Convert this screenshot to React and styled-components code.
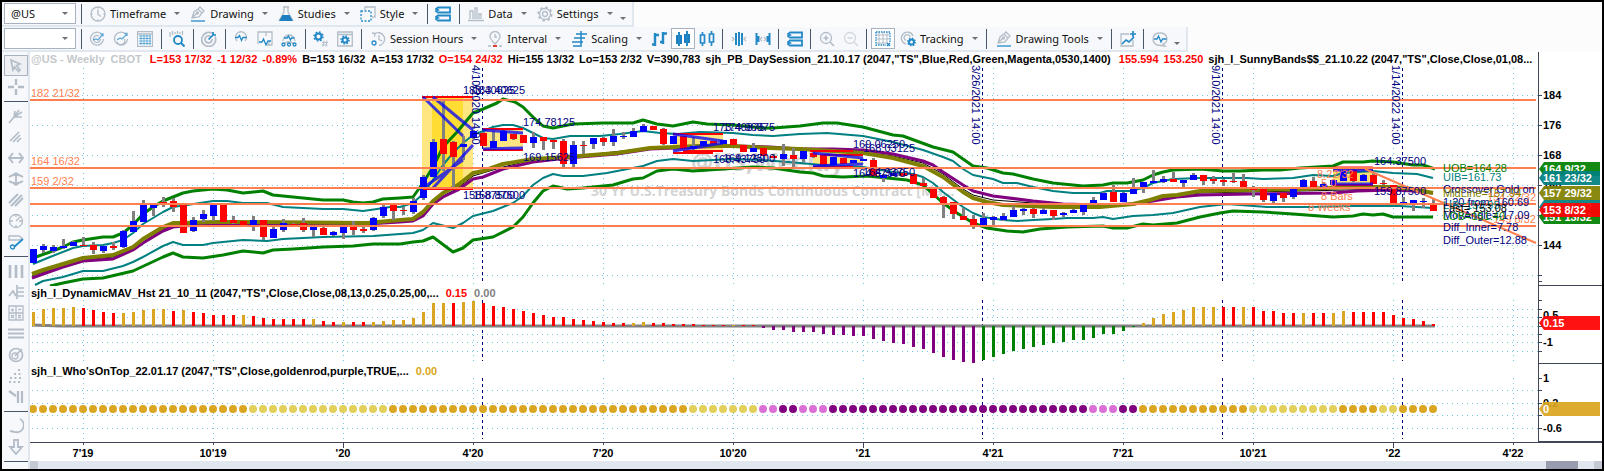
import styled, { createGlobalStyle } from "styled-components";

const GlobalStyle = createGlobalStyle`
  * {
    box-sizing: border-box;
  }
  body {
    margin: 0;
    background: #000;
    font-family: "Liberation Sans", Arial, sans-serif;
    font-size: 11px;
  }
`;

const Frame = styled.div`
  border: 2px solid #000;
  background: #fff;
  overflow: hidden;
`;

const ToolbarArea = styled.header`
  background: #fcfcfc;
`;

const ToolRow = styled.div`
  display: flex;
  align-items: center;
  width: max-content;
  height: 25px;
  padding: 0 4px 0 2px;
  background: #f7f8fb;
  border-bottom: 2px solid #e1e7ef;
  border-right: 2px solid #e1e7ef;
`;

const SelectBox = styled.div`
  position: relative;
  width: 72px;
  height: 21px;
  margin-right: 1px;
  border: 1px solid #a9b2c0;
  background: #fff;
`;

const SymbolSelect = styled.select`
  appearance: none;
  width: 100%;
  height: 100%;
  padding: 0 6px;
  border: 0;
  background: transparent;
  color: #111;
  font: 11px "Noto Sans", "Open Sans", sans-serif;
`;

const Caret = styled.span`
  flex: none;
  width: 6px;
  border: 3px solid transparent;
  border-top-color: #6d7078;
  border-bottom: 0;
`;

const SelectCaret = styled(Caret)`
  position: absolute;
  right: 7px;
  top: 8px;
  pointer-events: none;
`;

const Divider = styled.i`
  flex: none;
  width: 8px;
  height: 20px;
  background: linear-gradient(#4a5568, #4a5568) center / 1px 100% no-repeat;
`;

const ToolButton = styled.button`
  display: flex;
  align-items: center;
  justify-content: center;
  flex: none;
  width: 24px;
  height: 21px;
  padding: 0;
  border: 1px solid ${(p) => (p.$on ? "#a9b2c0" : "transparent")};
  background: ${(p) => (p.$on ? "#fff" : "transparent")};
`;

const MenuButton = styled.button`
  display: flex;
  align-items: center;
  flex: none;
  gap: 4px;
  height: 21px;
  padding: 0 5px;
  border: 0;
  background: transparent;
  color: #111;
  font: 11px "Noto Sans", "Open Sans", sans-serif;

  ${Caret} {
    margin-left: 4px;
  }
`;

const MoreButton = styled.button`
  display: flex;
  align-items: flex-end;
  width: 10px;
  height: 21px;
  padding: 0 2px 4px;
  border: 0;
  background: transparent;
`;

const Glyph = styled.svg`
  flex: none;
  width: 16px;
  height: 16px;
  fill: none;
  stroke: #b3bdc8;
  stroke-width: 1.3;

  .b {
    stroke: #2288c6;
  }
  .bf {
    fill: #1e7fc0;
    stroke: none;
  }
`;

const Body = styled.div`
  display: flex;
`;

const Rail = styled.nav`
  display: flex;
  flex-direction: column;
  flex: none;
  width: 28px;
  padding: 3px 0 0 2px;
  background: #f7f8fb;
  border-right: 2px solid #e1e7ef;
`;

const RailButton = styled(ToolButton)`
  background: ${(p) => (p.$on ? "#eef0f4" : "transparent")};
`;

const RailDivider = styled.i`
  height: 8px;
  background: linear-gradient(#4a5568, #4a5568) center / 100% 1px no-repeat;
`;

const Charts = styled.main`
  flex: 1;
  min-width: 0;
  background: #fff;
`;

const Pane = styled.section`
  display: flex;
  overflow: hidden;
`;

const Plot = styled.div`
  flex: 1;
  min-width: 0;
`;

const PlotCanvas = styled.div`
  display: flex;
  justify-content: flex-end;
`;

const Drawing = styled.svg`
  display: block;
  flex: none;
  overflow: visible;
  font-size: 11px;
`;

const Scale = styled(Drawing)`
  border-left: 1px solid #3f4656;
  border-bottom: 1px solid #3f4656;
  font-weight: bold;
`;

const StudyLine = styled.div`
  display: flex;
  gap: ${(p) => (p.$tight ? 5 : 7)}px;
  height: ${(p) => p.$h}px;
  padding-left: 1px;
  line-height: 15px;
  font-weight: bold;
  white-space: nowrap;
`;

const Value = styled.span`
  color: ${(p) => p.$c || "#000"};
`;

const TimeAxis = styled.div`
  display: flex;
  height: 19px;
  border-top: 1px solid #3f4656;
`;

const ScrollTrack = styled.div`
  display: flex;
  justify-content: space-between;
  height: 8px;
  background: #e1e7ef;
`;

const ScrollEnd = styled.i`
  width: 8px;
  background: #c4c9d3;
`;

const ScrollThumb = styled.i`
  width: 32px;
  margin: 0 16px 0 auto;
  background: #979dae;
`;

const icons = {
  clock: (
    <>
      <circle cx="8" cy="8" r="7" />
      <path d="M8 3.500v5l3 2M8 1v1.500M1 8h1.500M15 8h-1.500M8 15v-1.500" />
    </>
  ),
  pen: (
    <>
      <path d="M2 12l2-6 4-3 4 4-3 4zM8 3l2-2 4 4-2 2M2 12l5-5" />
      <circle cx="7.500" cy="7" r="1" />
      <path className="b" d="M1 15h14" />
    </>
  ),
  flask: (
    <>
      <path d="M5 1h6M6 1v5l-4.500 8h13L10 6V1" />
      <path className="bf" d="M4.500 9h7l3.500 6H1z" />
    </>
  ),
  style: (
    <>
      <path d="M5 4V1h10v10h-3" />
      <path className="b" strokeDasharray="2 1.500" d="M1 5h10v10H1z" />
    </>
  ),
  link: <path className="b" strokeWidth="1.800" d="M3 1.500h12v5H3L1 5l2-1-2-1zM3 9.500h12v5H3L1 13l2-1-2-1z" />,
  data: <path d="M2 13V5h3v8M7 13V2h2v11M11 13V8h2v5M0 14.500h16" />,
  gear: (
    <>
      <circle cx="8" cy="8" r="2.500" />
      <circle cx="8" cy="8" r="5.500" />
      <circle cx="8" cy="8" r="6.700" strokeDasharray="2.600 2.660" strokeWidth="1.800" />
    </>
  ),
  radarPulse: (
    <>
      <path d="M12 2.500A6.500 6.500 0 1 0 14.500 8M10 5a3.500 3.500 0 1 0 1.500 3" />
      <path className="b" opacity=".7" d="M4 9l3-1 2 1 5-6M11.500 3H14v2.500" />
    </>
  ),
  radarUp: (
    <>
      <path d="M12 2.500A6.500 6.500 0 1 0 14.500 8M4 11a4 4 0 0 0 7.500-3" />
      <path className="b" opacity=".7" d="M4 9l3-2 2 1 5-5M11.500 2.500H14V5" />
    </>
  ),
  table: (
    <>
      <path d="M.5.500h15v15H.5zM1 3h14" />
      <path className="b" strokeWidth="1" d="M2 5h12M2 7.500h12M2 10h12M2 12.500h12M4 4v10M7 4v10M10 4v10M13 4v10" opacity=".6" />
    </>
  ),
  search: (
    <>
      <path d="M1 1v5M3.500 0v4M6 1v2M8.500 0v3M11 1v2M13.500 0v4" />
      <circle className="b" cx="9" cy="9" r="4" strokeWidth="1.800" />
      <path className="b" strokeWidth="2" d="M12 12l3.500 3.500" />
    </>
  ),
  target: (
    <>
      <path strokeWidth="1.700" d="M11 2.300A7 7 0 1 0 14 5.500M9.500 5.500A3.500 3.500 0 1 0 11 8" />
      <path className="b" strokeWidth="1.700" d="M7.500 8.500L13 3M12 1v3h3" />
    </>
  ),
  pulse: (
    <>
      <path d="M4 10a5.500 5.500 0 1 1 8 0" />
      <path className="b" d="M2 6.500h3l1.500-2 2 5 1.500-3h4" />
    </>
  ),
  pulseBox: (
    <>
      <path d="M1 13V1h14v13h-5M9 1v4M12 14v-3" />
      <path className="b" d="M2 11h3l1.500-3 2.500 6 2-4h3" />
    </>
  ),
  pulseNet: (
    <>
      <path d="M2 10a6 6 0 1 1 12 0M3 13l3-2 4 0 3 2" />
      <path className="b" d="M3 7h3l1.500-2 2 4 1-2h3" />
      <circle className="b" cx="2.500" cy="13.500" r="1.500" />
      <circle className="b" cx="8" cy="13.500" r="1.500" />
      <circle className="b" cx="13.500" cy="13.500" r="1.500" />
    </>
  ),
  gearHash: (
    <>
      <circle className="b" cx="5.500" cy="5.500" r="3" strokeWidth="2" />
      <circle className="b" cx="5.500" cy="5.500" r="4.500" strokeDasharray="1.700 1.830" strokeWidth="1.500" />
      <path d="M11 9.500l-1 6M14 9.500l-1 6M9 11.500h6M8.500 14h6" strokeWidth="1" />
    </>
  ),
  gearBox: (
    <>
      <path d="M.7 1h14.600v14H.7zM1 3.500h14" />
      <circle className="b" cx="8" cy="9" r="2.500" strokeWidth="2" />
      <circle className="b" cx="8" cy="9" r="4" strokeDasharray="1.500 1.640" strokeWidth="1.500" />
    </>
  ),
  session: (
    <>
      <path d="M4 3a6.500 6.500 0 1 1 5 11.500M9 4v4.500l3 1.500" />
      <path d="M2 2l3 .5-.5 3" />
      <circle className="b" cx="4" cy="12" r="2" />
    </>
  ),
  pin: (
    <>
      <path d="M8 13C4 9 3 7.500 3 5.500a5 5 0 0 1 10 0C13 7.500 12 9 8 13zM8 3v3h2M1 15h3M12 15h3" />
      <path stroke="#e04030" strokeWidth="2" d="M6 15h4" />
    </>
  ),
  scaling: <path className="b" strokeWidth="1.500" d="M10 0v16M5 3h11M3 7h11M1 11h11M2 15h7" />,
  ohlc: <path className="b" strokeWidth="2.400" d="M4 2v13M1 13.500h3M4 4h4M12 1v12M9 11h3M12 2.500h4" />,
  candles: (
    <>
      <path className="bf" d="M1 4h6v9H1zM9 3h6v9H9z" />
      <path className="b" strokeWidth="2" d="M4 1v14M12 0v15" />
    </>
  ),
  hollow: <path className="b" strokeWidth="1.700" d="M1.500 4h4v8h-4zM10.500 3h4v8h-4zM3.500 1v3M3.500 12v3M12.500 0v3M12.500 11v4" />,
  squeeze: (
    <>
      <path className="b" strokeWidth="2" d="M5 2v12M8 1v14M11 2v12" />
      <path d="M1 6l2 2-2 2M15 6l-2 2 2 2" />
    </>
  ),
  spread: (
    <>
      <path className="b" strokeWidth="2" d="M1.500 2v12M14.500 2v12M3.500 5v6M12.500 5v6" />
      <path d="M7 6L5 8l2 2M9 6l2 2-2 2" />
    </>
  ),
  zoomIn: (
    <>
      <circle cx="7" cy="7" r="5.500" />
      <path d="M4.500 7h5M7 4.500v5M11 11l4 4" strokeWidth="1.700" />
    </>
  ),
  zoomOut: (
    <g opacity=".55">
      <circle cx="7" cy="7" r="5.500" />
      <path d="M4.500 7h5M11 11l4 4" />
    </g>
  ),
  grid: (
    <>
      <path strokeWidth="1" d="M1 4h13M1 8h13M1 12h11M4 1v13M8 1v13M12 1v11" />
      <path className="b" strokeDasharray="1.500 1" d="M1 1h14v10M1 1v13h10" />
      <path className="b" d="M12 12l3 3M15 12l-3 3" />
    </>
  ),
  tracking: (
    <>
      <path d="M13 5A6 6 0 1 0 6 13M10 6A3 3 0 1 0 6 9.500" />
      <circle className="b" cx="11.500" cy="11" r="2.500" strokeWidth="2" />
      <circle className="b" cx="11.500" cy="11" r="3.800" strokeDasharray="1.400 1.580" />
    </>
  ),
  addChart: (
    <>
      <path d="M9 3H1v12h12V9" />
      <path className="b" strokeWidth="1.700" d="M2 13l4-4 3 2 5-5M13 0v6M10 3h6" />
    </>
  ),
  bubble: (
    <>
      <path d="M5 14c-6-3-5-12 3-12s9 9 3 11l2 2z" />
      <path className="b" d="M2 8h3l1.500-3 2.500 6 1.500-3h4" />
    </>
  ),
  cursor: <path strokeWidth="1.700" d="M3 2l9 4-3.500 1.500L12 12l-1.500 1.500-4-4.500L5 12z" />,
  cross: <path strokeWidth="2.400" d="M8 0v6M8 10v6M0 8h6M10 8h6" />,
  fan: <path strokeWidth="1.600" d="M1 15l5-6M6 9l1-6M6 9l5-7M6 9l8-5M6 9l8 0" />,
  speed: <path strokeWidth="1.700" d="M2 12l9-9M5 13l7-7M9 13l4-4" />,
  widthArrow: <path strokeWidth="2" d="M1 8h14M5 3L1 8l4 5M11 3l4 5-4 5" />,
  heightArrow: <path strokeWidth="1.800" d="M8 2v12M1 6c4-3 10-3 14 0M1 10c4 3 10 3 14 0M5 4l3-2 3 2M5 12l3 2 3-2" />,
  slashes: <path strokeWidth="2" d="M1 11l9-9M3 14L14 3M7 14l8-8" />,
  gauge: (
    <>
      <circle cx="8" cy="8" r="6.500" />
      <path d="M8 8l4-4M2 8h3M11 8h3M8 2v2M8 12v2" />
    </>
  ),
  brush: (
    <>
      <path d="M1 2h10l3 2-3 2H1z" />
      <path className="b" strokeWidth="1.700" d="M15 5l-9 8" />
      <circle className="b" cx="4.500" cy="13" r="2" />
    </>
  ),
  bars: <path strokeWidth="2.600" d="M2 2v13M8 2v13M14 2v13" />,
  fork: <path strokeWidth="1.700" d="M1 12l4-5 3 5M9 1v14M10 4h6M10 8h6M10 12h6" />,
  calc: <path d="M1 1h14v14H1zM8 1v14M1 8h14M3 5h3M4.500 3.500v3M10 4.500h3M3 10l3 3M6 10l-3 3M10 10.500h3M10 12.500h3" />,
  lines: <path strokeWidth="2" d="M0 3.500h16M0 7.500h16M0 11.500h16" />,
  compass: (
    <>
      <circle cx="8" cy="8" r="6.500" strokeWidth="1.700" />
      <circle cx="7" cy="9" r="3" />
      <path strokeWidth="1.700" d="M7 9l7-7" />
    </>
  ),
  dots: <path strokeWidth="2.200" strokeDasharray="2 2.500" d="M1 14h12M2 10h12M6 6h9M10 2h4" />,
  wedge: <path strokeWidth="2.200" d="M1 2l7 5M10 2v12M14 2v12" />,
  arc: <path strokeWidth="1.800" d="M12 1a7 7 0 0 1-5 13l-5-1" />,
  down: <path strokeWidth="1.800" d="M6 1h4v7h4l-6 7-6-7h4z" />,
};

const Icon = ({ name }) => (
  <Glyph viewBox="0 0 16 16" aria-hidden="true">
    {icons[name]}
  </Glyph>
);

const Tool = ({ icon, on }) => (
  <ToolButton $on={on} aria-label={icon}>
    <Icon name={icon} />
  </ToolButton>
);

const MenuTool = ({ icon, children }) => (
  <MenuButton>
    <Icon name={icon} />
    {children}
    <Caret />
  </MenuButton>
);

const Picker = ({ label, value }) => (
  <SelectBox>
    <SymbolSelect aria-label={label} defaultValue={value}>
      <option>{value}</option>
    </SymbolSelect>
    <SelectCaret />
  </SelectBox>
);

// x of every weekly bar
const barX = (i) => 33 + i * 10;

const quarters = [
  [83, "7'19"],
  [213, "10'19"],
  [343, "'20"],
  [473, "4'20"],
  [603, "7'20"],
  [733, "10'20"],
  [863, "'21"],
  [993, "4'21"],
  [1123, "7'21"],
  [1253, "10'21"],
  [1393, "'22"],
  [1513, "4'22"],
];

const sessions = [
  [482, "4/10/2020 14:00"],
  [982, "3/26/2021 14:00"],
  [1222, "9/10/2021 14:00"],
  [1402, "1/14/2022 14:00"],
];

const bands = {
  upperOuter:
    "33,258 50,252 63,247 73,242 83,240 103,237 113,237 123,233 133,225 143,214 153,207 163,201 173,197 183,193 193,191 203,190 213,189 227,190 243,193 263,191 273,195 293,197 323,200 343,200 353,202 363,203 373,202 383,199 400,198 413,197 423,183 433,167 443,147 457,132 473,113 483,109 497,103 503,99 515,102 523,107 533,117 543,126 553,128 563,126 573,124 603,123 633,123 643,120 657,124 673,126 693,122 707,124 733,125 763,128 773,128 800,126 823,123 837,123 863,127 893,135 903,136 933,147 953,152 963,159 973,166 987,168 1003,173 1013,174 1033,179 1053,183 1083,186 1103,185 1113,183 1127,183 1143,180 1153,175 1163,172 1173,170 1200,169 1223,171 1240,171 1263,170 1280,170 1300,168 1333,166 1343,162 1353,162 1363,162 1373,161 1393,162 1413,165 1423,165 1435,169",
  upperInner:
    "33,264 50,257 73,248 83,246 103,245 113,243 123,240 133,233 143,224 163,212 173,207 187,205 200,203 213,201 227,201 243,203 267,203 283,207 323,209 343,209 363,211 377,209 390,207 400,207 413,203 423,194 433,180 443,165 453,153 463,143 473,135 493,127 503,125 513,125 523,128 533,133 543,138 553,139 570,136 600,136 620,134 643,131 660,133 677,134 700,132 733,133 753,135 773,136 800,134 827,133 863,136 893,142 923,150 943,157 953,161 963,169 973,175 993,179 1003,183 1017,183 1033,187 1053,191 1073,193 1100,193 1107,191 1130,191 1143,188 1153,183 1173,179 1200,178 1220,178 1247,178 1263,179 1293,178 1313,175 1333,176 1343,173 1373,171 1393,173 1417,174 1433,178",
  gold:
    "32,274 43,270 63,264 83,258 113,255 133,247 143,239 163,227 173,223 183,223 213,222 240,222 367,223 400,220 413,219 423,212 433,201 443,193 458,185 473,173 483,171 503,164 533,159 567,157 617,153 650,148 700,146 733,146 770,148 800,149 833,151 863,153 893,158 923,166 943,177 963,192 973,198 987,202 1003,205 1053,207 1100,207 1133,204 1150,200 1163,196 1177,195 1200,191 1300,189 1353,187 1393,187 1413,189 1433,193",
  purple:
    "32,278 43,274 63,267 83,261 113,259 133,250 143,243 163,231 173,227 183,226 213,224 240,224 367,224 400,222 413,221 423,216 433,204 443,197 458,190 473,179 483,177 503,169 533,162 567,158 617,154 650,149 700,147 733,146 770,147 800,149 833,149 863,150 893,154 923,161 933,165 943,172 963,185 973,191 993,196 1033,201 1063,204 1100,205 1133,204 1153,201 1177,197 1200,195 1250,194 1333,193 1357,191 1393,190 1413,191 1433,193",
  middle:
    "32,276 63,265 83,260 113,257 133,249 163,229 173,225 213,223 367,224 400,221 413,220 423,214 433,203 443,196 458,188 473,176 503,167 533,160 567,157 650,148 733,146 800,149 863,152 893,156 923,163 943,174 963,189 973,195 993,200 1033,203 1063,205 1100,206 1133,204 1177,196 1200,193 1300,191 1393,189 1433,193",
  lowerInner:
    "35,285 43,281 63,277 83,271 103,271 123,266 133,262 143,257 163,246 173,242 183,245 203,245 213,243 243,240 267,241 283,239 323,237 373,236 400,234 413,233 423,230 433,223 453,228 463,223 473,216 493,211 513,203 523,196 533,185 543,178 553,174 563,176 583,176 607,173 643,166 657,161 673,159 693,161 733,159 763,160 800,163 833,166 863,167 893,172 913,174 923,177 933,183 943,192 963,207 973,213 983,217 1003,220 1017,221 1033,220 1053,219 1067,218 1093,218 1103,217 1113,219 1133,216 1153,215 1173,213 1200,207 1227,204 1267,207 1310,207 1353,206 1400,206 1433,208",
  lowerOuter:
    "50,286 63,283 83,279 103,278 133,271 163,257 173,253 183,257 203,258 223,255 233,253 243,251 263,253 273,250 293,249 323,247 353,246 373,244 400,244 413,242 423,241 433,237 453,252 463,248 473,240 493,237 513,227 523,217 533,203 543,191 553,186 567,189 583,188 613,185 633,179 643,178 657,171 673,169 693,171 753,167 773,168 800,172 813,173 823,176 843,177 867,176 887,178 907,180 923,185 933,194 943,203 957,213 973,223 987,228 1007,231 1023,232 1040,229 1067,227 1103,226 1113,228 1127,228 1143,224 1153,225 1177,223 1200,217 1220,213 1233,211 1263,212 1293,214 1333,217 1353,216 1363,214 1373,215 1383,214 1393,217 1433,217",
};

// direction, body top, body bottom, wick top, wick bottom
const candles = `
b 249 263 249 263,b 246 250 244 253,b 247 251 245 253,b 246 248 239 249,b 242 246 241 246,r 245 246 237 246,r 245 250 242 254,b 246 251 246 253,r 246 248 242 250,b 231 247 230 248,
b 221 232 211 232,b 204 222 200 222,b 204 208 204 216,r 202 204 197 207,r 201 207 198 212,r 205 233 205 233,b 220 231 217 232,b 214 219 210 222,b 204 216 204 221,r 204 222 204 222,
r 220 223 216 224,r 221 225 221 225,b 220 226 216 231,r 220 237 220 240,b 229 238 226 238,b 223 230 219 232,r 224 225 223 226,r 223 230 218 232,b 226 230 226 237,r 228 235 227 235,
b 232 235 231 236,b 227 233 225 239,r 226 230 221 235,r 229 231 225 233,b 218 230 217 231,b 207 216 205 218,r 205 211 205 220,r 210 211 207 215,b 201 212 198 214,b 177 198 175 200,
b 142 177 139 177,r 139 154 99 171,r 142 157 141 187,b 144 147 136 160,b 131 138 130 139,r 133 146 132 146,b 141 148 131 148,b 131 141 130 141,r 134 139 134 140,r 135 143 135 143,
b 137 143 132 148,r 137 141 137 150,r 140 142 140 149,r 141 164 139 169,b 145 164 141 167,r 145 146 141 154,b 138 144 138 149,r 138 142 137 146,b 136 142 129 146,b 136 137 132 139,
b 131 137 128 137,b 126 132 124 132,r 126 130 126 130,r 129 144 128 145,b 136 144 136 144,r 136 149 136 149,b 146 149 137 150,b 141 146 141 146,r 141 144 141 144,b 140 144 140 144,
r 139 145 139 145,r 145 152 145 152,b 148 152 143 152,r 148 156 148 156,r 156 158 154 158,b 154 159 144 166,r 155 159 148 167,b 151 159 151 162,r 153 157 151 158,r 154 165 154 165,
b 157 165 157 165,r 158 164 158 164,b 160 163 160 163,b 159 161 159 161,r 160 176 158 176,b 175 178 174 182,b 173 176 172 176,r 173 176 173 177,r 174 184 174 184,r 183 186 178 186,
r 189 198 188 198,r 197 203 196 218,r 202 214 202 219,r 216 220 208 220,r 219 225 215 229,b 218 225 213 225,b 217 220 216 225,b 216 220 213 221,b 210 217 206 217,b 209 211 208 215,
r 209 214 208 218,b 210 214 208 214,r 210 216 210 220,b 213 215 212 217,b 210 213 209 213,b 205 212 205 215,b 200 204 197 204,b 193 200 192 200,r 192 202 185 202,b 193 202 192 202,
b 189 194 178 194,b 182 187 182 193,b 181 183 170 183,b 179 182 176 183,r 179 182 172 182,b 180 183 180 187,b 175 180 173 180,r 175 181 175 185,r 179 181 176 184,r 180 182 179 186,
r 181 182 173 183,r 181 187 174 187,r 188 190 186 197,r 189 200 189 202,b 193 201 193 203,r 193 198 193 202,b 189 197 189 199,b 180 187 179 187,r 181 187 177 187,b 184 187 182 187,
b 180 185 180 186,b 170 181 170 181,r 170 181 169 182,b 175 181 174 181,r 175 184 171 184,r 183 184 180 185,r 185 203 185 203,b 202 203 197 203,b 200 203 200 211,b 201 202 198 208,
r 203 211 198 211`
  .trim()
  .split(",")
  .map((row) => row.trim().split(" "));

const levels = [100, 168, 188, 204, 226];
const priceGrid = [95, 125, 155, 185, 215, 245, 275];

const histColors = { g: "#daa520", r: "#f00", p: "#800080", n: "#008000", y: "#e2d05a", o: "#da70d6" };
const histKinds =
  "gggggrrrrgggggrgrrrrrgrrrrrrgrrgrrggggggggrggrrrrrrrrrrrrrrrggrrrrrrrrgrr" + "p".repeat(22) + "n".repeat(16) + "ggggggggrrgrrrrrgrrggrrrrrrrrr";
const histEnds = [
  312, 309, 308, 308, 307, 308, 310, 312, 313, 313, 312, 310, 309, 309, 311, 310, 312, 313, 315, 315, 315, 315, 316, 318,
  319, 319, 319, 319, 319, 321, 322, 322, 322, 322, 322, 321, 320, 320, 318, 312, 303, 303, 303, 302, 301, 303, 306, 307,
  309, 311, 313, 315, 317, 317, 319, 320, 321, 322, 323, 323, 323, 322, 323, 323, 324, 324, 324, 325, 325, 325, 325, 325,
  325, 328, 330, 330, 332, 332, 332, 334, 335, 335, 336, 336, 339, 341, 343, 344, 347, 349, 353, 357, 360, 362, 363, 360,
  357, 354, 351, 349, 347, 345, 343, 342, 340, 340, 338, 334, 334, 331, 327, 323, 318, 314, 312, 310, 307, 307, 307, 307,
  307, 307, 307, 311, 311, 313, 313, 313, 313, 313, 313, 311, 312, 312, 312, 312, 315, 318, 319, 321, 324,
];

const dotRuns = [
  ["g", 22],
  ["y", 14],
  ["g", 30],
  ["y", 7],
  ["o", 2],
  ["p", 2],
  ["o", 3],
  ["p", 26],
  ["o", 3],
  ["p", 2],
  ["g", 11],
  ["y", 9],
  ["g", 4],
  ["y", 2],
  ["g", 4],
];
const dotKinds = dotRuns.map(([kind, n]) => kind.repeat(n)).join("");

const navyLabels = [
  [463, 94, "183.40625"],
  [473, 94, "183.40625"],
  [463, 199, "158.87500"],
  [473, 199, "158.87500"],
  [523, 126, "174.78125"],
  [523, 161, "169.15625"],
  [713, 131, "173.46875"],
  [723, 131, "174.96875"],
  [713, 163, "168.43750"],
  [723, 162, "169.12500"],
  [853, 148, "169.06250"],
  [863, 152, "168.03125"],
  [853, 177, "164.87500"],
  [863, 176, "164.93750"],
  [1374, 165, "164.37500"],
  [1374, 195, "159.87500"],
];

const readouts = [
  [172, "UOB=164.28", "#008000"],
  [181, "UIB=161.73", "#008080"],
  [193, "Crossover Gold on", "#000080"],
  [197, "MidLine=157.94", "#808000"],
  [206, "1:20 from: 160.69", "#000080"],
  [209, "LIB=153.95", "#008080"],
  [212, "Last= 153.08", "#000"],
  [219, "MovAngle=-17.09", "#000080"],
  [220, "LOB=151.40", "#008000"],
  [231, "Diff_Inner=7.78", "#000080"],
  [244, "Diff_Outer=12.88", "#000080"],
];

const Grid = ({ rows, top, bottom }) => (
  <g stroke="#78c4e4" strokeDasharray="1 4" shapeRendering="crispEdges">
    {rows.map((y) => (
      <line key={y} x1="32" x2="1538" y1={y + 0.5} y2={y + 0.5} />
    ))}
    {quarters.map(([x]) => (
      <line key={x} x1={x + 0.5} x2={x + 0.5} y1={top} y2={bottom} />
    ))}
  </g>
);

const SessionLines = ({ top, bottom }) => (
  <g stroke="#000080" strokeDasharray="3 3" shapeRendering="crispEdges">
    {sessions.map(([x]) => (
      <line key={x} x1={x + 0.5} x2={x + 0.5} y1={top} y2={bottom} />
    ))}
  </g>
);

const Zone = ({ x, y, w, h, fill = "#ffe680" }) => <rect x={x} y={y} width={w} height={h} fill={fill} />;

const PriceChart = () => (
  <Drawing width="1508" height="218" viewBox="30 68 1508 218">
    <g fill="#d4d4d4" fontFamily="Open Sans, Noto Sans, sans-serif" fontWeight="bold">
      <text x="691" y="171" fontSize="25">
        @US,Weekly
      </text>
      <text x="591" y="196" fontSize="14">
        30 Yr U.S.Treasury Bonds Continuous Contract [Ma...
      </text>
    </g>
    <Grid rows={priceGrid} top={68} bottom={286} />
    <Zone x={422} y={97} w={51} h={92} />
    <Zone x={432} y={97} w={31} h={92} fill="#ffdd33" />
    <Zone x={483} y={129} w={40} h={21} />
    <Zone x={673} y={134} w={50} h={17} />
    <Zone x={813} y={152} w={50} h={14} />
    <Zone x={1333} y={168} w={40} h={17} fill="#ffdf70" />
    <SessionLines top={68} bottom={284} />
    <g fill="none" strokeLinejoin="round">
      <polyline points={bands.upperOuter} stroke="#008000" strokeWidth="3" />
      <polyline points={bands.upperInner} stroke="#008080" strokeWidth="2" />
      <polyline points={bands.middle} stroke="#000" />
      <polyline points={bands.purple} stroke="#800080" strokeWidth="3" />
      <polyline points={bands.gold} stroke="#808000" strokeWidth="4" />
      <polyline points={bands.lowerInner} stroke="#008080" strokeWidth="2" />
      <polyline points={bands.lowerOuter} stroke="#008000" strokeWidth="3" />
    </g>
    <g shapeRendering="crispEdges">
      {candles.map(([dir, top, bottom, high, low], i) => (
        <g key={i}>
          <rect x={barX(i) - 1} y={high} width="3" height={low - high} fill="#808080" />
          <rect x={barX(i) - 3} y={top} width="7" height={bottom - top} fill={dir === "b" ? "#00f" : "#f00"} />
        </g>
      ))}
    </g>
    <g stroke="#f00" strokeWidth="2">
      <path d="M422 97h51M423 189h50M483 129h40M483 150h40M673 134h50M683 151h40M673 153h40M810 151h43M823 155h40M813 167h40M1333 185h40" />
      <path d="M1333 168h40" strokeWidth="3" />
    </g>
    <g stroke="#00f" strokeWidth="3" opacity=".75">
      <path d="M423 97L463 136M433 97L473 130M423 188L463 160M433 188L473 145M483 130L523 133M483 149L523 148M673 134L723 141M673 151L723 143M813 153L863 158M813 166L863 164M1333 170h40M1333 184h40" />
    </g>
    <g stroke="#ff7f50" strokeWidth="2">
      {levels.map((y) => (
        <line key={y} x1="30" x2="1536" y1={y} y2={y} />
      ))}
      <path d="M1365 169L1536 243" />
    </g>
    <g fill="#ff7f50">
      <text x="31" y="97">
        182 21/32
      </text>
      <text x="31" y="165">
        164 16/32
      </text>
      <text x="31" y="185">
        159 2/32
      </text>
      <text x="1317" y="178">
        8.22/32
      </text>
      <text x="1321" y="187">
        5.0
      </text>
      <text x="1321" y="200">
        8 Bars
      </text>
      <text x="1308" y="211">
        8 Weeks
      </text>
      <text x="1536" y="201" textAnchor="end">
        154 22/32
      </text>
      <text x="1536" y="223" textAnchor="end">
        149 8/32
      </text>
    </g>
    <g fill="#000080">
      {navyLabels.map(([x, y, label], i) => (
        <text key={i} x={x} y={y}>
          {label}
        </text>
      ))}
      {sessions.map(([x, label]) => (
        <text key={x} transform={`translate(${x - 10} 65) rotate(90)`}>
          {label}
        </text>
      ))}
    </g>
    {readouts.map(([y, label, color]) => (
      <text key={label} x="1443" y={y} fill={color}>
        {label}
      </text>
    ))}
  </Drawing>
);

const Tag = ({ y, color, children }) => (
  <g>
    <path d={`M0 ${y + 7}L5 ${y}H61V${y + 14}H5Z`} fill={color} opacity=".93" />
    <text x="4" y={y + 11} fill="#fff">
      {children}
    </text>
  </g>
);

const Ticks = ({ ys }) => (
  <g stroke="#3f4656" shapeRendering="crispEdges">
    {ys.map((y) => (
      <line key={y} x1="0" x2="3" y1={y + 0.5} y2={y + 0.5} />
    ))}
  </g>
);

const axisPrices = [
  [99, "184"],
  [129, "176"],
  [159, "168"],
  [189, "160"],
  [249, "144"],
];

const Histogram = () => (
  <Drawing width="1508" height="64" viewBox="30 300 1508 64">
    <Grid rows={[309, 317, 326, 334, 342, 351]} top={300} bottom={361} />
    <SessionLines top={300} bottom={361} />
    <path d="M32 325L60 326H1435" stroke="#808080" strokeWidth="3" fill="none" />
    <g shapeRendering="crispEdges">
      {histEnds.map((end, i) => (
        <rect
          key={i}
          x={barX(i) - 1}
          y={Math.min(end, 326)}
          width="3"
          height={Math.abs(326 - end)}
          fill={histColors[histKinds[i]]}
        />
      ))}
    </g>
  </Drawing>
);

const TrendDots = () => (
  <Drawing width="1508" height="64" viewBox="30 378 1508 64">
    <Grid rows={[390, 403, 415, 428]} top={378} bottom={441} />
    <SessionLines top={378} bottom={439} />
    {[...dotKinds].map((kind, i) => (
      <circle key={i} cx={barX(i)} cy="409" r="4" fill={histColors[kind]} />
    ))}
  </Drawing>
);

const App = () => (
  <>
    <GlobalStyle />
    <Frame>
      <ToolbarArea>
        <ToolRow>
          <Picker label="Symbol" value="@US" />
          <Divider />
          <MenuTool icon="clock">Timeframe</MenuTool>
          <MenuTool icon="pen">Drawing</MenuTool>
          <MenuTool icon="flask">Studies</MenuTool>
          <MenuTool icon="style">Style</MenuTool>
          <Divider />
          <Tool icon="link" />
          <Divider />
          <MenuTool icon="data">Data</MenuTool>
          <MenuTool icon="gear">Settings</MenuTool>
          <MoreButton aria-label="More">
            <Caret />
          </MoreButton>
        </ToolRow>
        <ToolRow>
          <Picker label="Template" value="" />
          <Divider />
          <Tool icon="radarPulse" />
          <Tool icon="radarUp" />
          <Tool icon="table" />
          <Divider />
          <Tool icon="search" />
          <Divider />
          <Tool icon="target" />
          <Divider />
          <Tool icon="pulse" />
          <Tool icon="pulseBox" />
          <Tool icon="pulseNet" />
          <Divider />
          <Tool icon="gearHash" />
          <Tool icon="gearBox" />
          <Divider />
          <MenuTool icon="session">Session Hours</MenuTool>
          <MenuTool icon="pin">Interval</MenuTool>
          <MenuTool icon="scaling">Scaling</MenuTool>
          <Tool icon="ohlc" />
          <Tool icon="candles" on />
          <Tool icon="hollow" />
          <Divider />
          <Tool icon="squeeze" />
          <Tool icon="spread" />
          <Divider />
          <Tool icon="link" />
          <Divider />
          <Tool icon="zoomIn" />
          <Tool icon="zoomOut" />
          <Divider />
          <Tool icon="grid" on />
          <MenuTool icon="tracking">Tracking</MenuTool>
          <Divider />
          <MenuTool icon="pen">Drawing Tools</MenuTool>
          <Divider />
          <Tool icon="addChart" />
          <Divider />
          <Tool icon="bubble" />
          <MoreButton aria-label="More">
            <Caret />
          </MoreButton>
        </ToolRow>
      </ToolbarArea>
      <Body>
        <Rail>
          {[
            ["cursor", "cross"],
            ["fan", "speed", "widthArrow", "heightArrow", "slashes", "gauge", "brush"],
            ["bars", "fork", "calc", "lines", "compass", "dots", "wedge"],
            ["arc", "down"],
          ].map((group) => [
            ...group.map((icon) => (
              <RailButton key={icon} $on={icon === "cursor"} aria-label={icon}>
                <Icon name={icon} />
              </RailButton>
            )),
            <RailDivider key={group[0] + "-end"} />,
          ])}
        </Rail>
        <Charts>
          <Pane>
            <Plot>
              <StudyLine $h={16} $tight>
                <Value $c="#c4c8cc">@US - Weekly&nbsp; CBOT&nbsp;</Value>
                <Value $c="#f00">L=153 17/32</Value>
                <Value $c="#f00">-1 12/32</Value>
                <Value $c="#f00">-0.89%</Value>
                <Value>B=153 16/32</Value>
                <Value>A=153 17/32</Value>
                <Value $c="#f00">O=154 24/32</Value>
                <Value>Hi=155 13/32</Value>
                <Value>Lo=153 2/32</Value>
                <Value>V=390,783</Value>
                <Value>sjh_PB_DaySession_21.10.17 (2047,"TS",Blue,Red,Green,Magenta,0530,1400)</Value>
                <Value $c="#f00">&nbsp;155.594</Value>
                <Value $c="#f00">153.250</Value>
                <Value>sjh_I_SunnyBands$$_21.10.22 (2047,"TS",Close,Close,01,08...</Value>
              </StudyLine>
              <PlotCanvas>
                <PriceChart />
              </PlotCanvas>
            </Plot>
            <Scale width="64" height="234" viewBox="0 52 63 233">
              <Ticks ys={[...priceGrid, 281]} />
              {axisPrices.map(([y, label]) => (
                <text key={label} x="4" y={y}>
                  {label}
                </text>
              ))}
              <Tag y={162} color="#008000">
                164 9/32
              </Tag>
              <Tag y={171} color="#008080">
                161 23/32
              </Tag>
              <Tag y={200} color="#008080">
                153 31/32
              </Tag>
              <Tag y={186} color="#808000">
                157 29/32
              </Tag>
              <Tag y={210} color="#008000">
                151 13/32
              </Tag>
              <Tag y={203} color="#f00">
                153 8/32
              </Tag>
            </Scale>
          </Pane>
          <Pane>
            <Plot>
              <StudyLine $h={14}>
                <Value>sjh_I_DynamicMAV_Hst 21_10_11 (2047,"TS",Close,Close,08,13,0.25,0.25,00,...</Value>
                <Value $c="#f00">0.15</Value>
                <Value $c="#808080">0.00</Value>
              </StudyLine>
              <PlotCanvas>
                <Histogram />
              </PlotCanvas>
            </Plot>
            <Scale width="64" height="78" viewBox="0 286 63 77">
              <Ticks ys={[300, 309, 317, 326, 334, 342, 351]} />
              <text x="4" y="319">
                0.5
              </text>
              <text x="4" y="346">
                -1
              </text>
              <Tag y={316} color="#f00">
                0.15
              </Tag>
            </Scale>
          </Pane>
          <Pane>
            <Plot>
              <StudyLine $h={14}>
                <Value>sjh_I_Who'sOnTop_22.01.17 (2047,"TS",Close,goldenrod,purple,TRUE,...</Value>
                <Value $c="#daa520">0.00</Value>
              </StudyLine>
              <PlotCanvas>
                <TrendDots />
              </PlotCanvas>
            </Plot>
            <Scale width="64" height="78" viewBox="0 364 63 77">
              <Ticks ys={[378, 390, 403, 415, 428]} />
              <text x="4" y="382">
                1
              </text>
              <text x="4" y="407">
                0.2
              </text>
              <text x="4" y="432">
                -0.6
              </text>
              <Tag y={402} color="#daa520">
                0
              </Tag>
            </Scale>
          </Pane>
          <TimeAxis>
            <Drawing width="1508" height="18" viewBox="30 443 1508 18">
              <g fontWeight="bold" textAnchor="middle">
                {quarters.map(([x, label]) => (
                  <text key={x} x={x} y="457">
                    {label}
                  </text>
                ))}
              </g>
              <g stroke="#3f4656" shapeRendering="crispEdges">
                {quarters.map(([x, label]) => (
                  <line key={x} x1={x + 0.5} x2={x + 0.5} y1="443" y2={label[0] === "'" ? 448 : 445} />
                ))}
              </g>
            </Drawing>
          </TimeAxis>
          <ScrollTrack>
            <ScrollEnd />
            <ScrollThumb />
            <ScrollEnd />
          </ScrollTrack>
        </Charts>
      </Body>
    </Frame>
  </>
);

export default App;
